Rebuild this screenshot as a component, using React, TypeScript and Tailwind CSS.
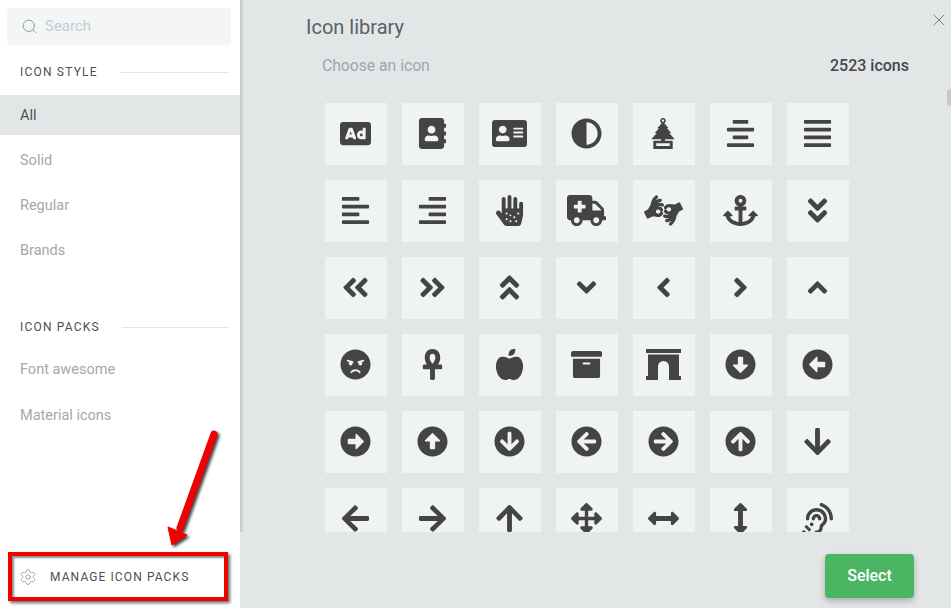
import { Search, Settings, X } from 'lucide-react';
import {
  FaAd, FaAddressBook, FaAddressCard, FaAdjust, FaAlignCenter, FaAlignJustify,
  FaAlignLeft, FaAlignRight, FaAllergies, FaAmbulance, FaAmericanSignLanguageInterpreting, FaAnchor, FaAngleDoubleDown,
  FaAngleDoubleLeft, FaAngleDoubleRight, FaAngleDoubleUp, FaAngleDown, FaAngleLeft, FaAngleRight, FaAngleUp,
  FaAngry, FaAnkh, FaAppleAlt, FaArchive, FaArrowAltCircleDown, FaArrowAltCircleLeft,
  FaArrowAltCircleRight, FaArrowAltCircleUp, FaArrowCircleDown, FaArrowCircleLeft, FaArrowCircleRight, FaArrowCircleUp, FaArrowDown,
  FaArrowLeft, FaArrowRight, FaArrowUp, FaArrowsAlt, FaArrowsAltH, FaArrowsAltV, FaAssistiveListeningSystems,
} from 'react-icons/fa';

// older FA5 glyphs, the package ships a different drawing for these two
function TreeFreshener() {
  return (
    <svg width="24" height="31" viewBox="0 0 24 32" fill="currentColor" fillRule="evenodd">
      <path d="M12 0a2.8 2.8 0 0 1 1.3 5.3L18 10.5h-2l4.500 5h-2L24 22H14v1.500h8V32H2v-8.500h8V22H0l5.500-6.500h-2l4.500-5H6l4.700-5.200A2.800 2.800 0 0 1 12 0Zm0 1.600a1.200 1.200 0 1 0 0 2.400 1.200 1.200 0 0 0 0-2.400ZM5 26v3h14v-3Z" />
    </svg>
  );
}

function Archway() {
  return (
    <svg width="35" height="31" viewBox="0 0 35 31" fill="currentColor">
      <path d="M0 0H35V4H0Z" />
      <path d="M2 5.500H33V27H35V31H23V17.500A5.500 5.500 0 0 0 12 17.500V31H0V27H2Z" />
    </svg>
  );
}

// size is the box the glyph is fitted in: wide FA glyphs need more than the 31px em
const icons: { Icon: React.ComponentType<{ size?: number }>; size?: number }[] = [
  { Icon: FaAd }, { Icon: FaAddressBook }, { Icon: FaAddressCard, size: 35 }, { Icon: FaAdjust }, { Icon: TreeFreshener }, { Icon: FaAlignCenter }, { Icon: FaAlignJustify },
  { Icon: FaAlignLeft }, { Icon: FaAlignRight }, { Icon: FaAllergies }, { Icon: FaAmbulance, size: 39 }, { Icon: FaAmericanSignLanguageInterpreting, size: 39 }, { Icon: FaAnchor, size: 35 }, { Icon: FaAngleDoubleDown },
  { Icon: FaAngleDoubleLeft }, { Icon: FaAngleDoubleRight }, { Icon: FaAngleDoubleUp }, { Icon: FaAngleDown }, { Icon: FaAngleLeft }, { Icon: FaAngleRight }, { Icon: FaAngleUp },
  { Icon: FaAngry }, { Icon: FaAnkh }, { Icon: FaAppleAlt }, { Icon: FaArchive }, { Icon: Archway }, { Icon: FaArrowAltCircleDown }, { Icon: FaArrowAltCircleLeft },
  { Icon: FaArrowAltCircleRight }, { Icon: FaArrowAltCircleUp }, { Icon: FaArrowCircleDown }, { Icon: FaArrowCircleLeft }, { Icon: FaArrowCircleRight }, { Icon: FaArrowCircleUp }, { Icon: FaArrowDown },
  { Icon: FaArrowLeft }, { Icon: FaArrowRight }, { Icon: FaArrowUp }, { Icon: FaArrowsAlt }, { Icon: FaArrowsAltH }, { Icon: FaArrowsAltV }, { Icon: FaAssistiveListeningSystems },
];

function SectionHeading({ label }: { label: string }) {
  return (
    <div className="flex items-center gap-[22px] pl-5 pr-[11px]">
      <span className="text-xs tracking-[1.2px] text-[#4a5058] whitespace-nowrap">{label}</span>
      <div className="h-px flex-1 bg-[#e3e6e7]" />
    </div>
  );
}

function Sidebar() {
  return (
    <aside className="w-[240px] h-full shrink-0 bg-white flex flex-col">
      <div className="ml-[7px] mr-[9px] mt-2 h-[37px] shrink-0 rounded-sm bg-[#f4f6f6] flex items-center pl-[14px] gap-[7px]">
        <Search className="w-[17px] h-[17px] text-[#8a9aa6]" strokeWidth={1.4} />
        <span className="text-[15px] text-[#c3ccd4]">Search</span>
      </div>

      <div className="mt-[19px]"><SectionHeading label="ICON STYLE" /></div>
      <div className="mt-[15px] flex flex-col gap-[5px] text-[14.500px] text-[#a3a8ad]">
        <div className="h-10 flex items-center pl-5 pt-0.5 bg-[#e3e6e7] text-[#4a5058]">All</div>
        <div className="h-10 flex items-center pl-5 pt-0.5">Solid</div>
        <div className="h-10 flex items-center pl-5 pt-0.5">Regular</div>
        <div className="h-10 flex items-center pl-5 pt-0.5">Brands</div>
      </div>

      <div className="mt-[49px]"><SectionHeading label="ICON PACKS" /></div>
      <div className="mt-[25px] flex flex-col gap-[27px] text-[14.500px] text-[#a3a8ad]">
        <div className="pl-5 h-[19px] leading-[19px]">Font awesome</div>
        <div className="pl-5 h-[19px] leading-[19px]">Material icons</div>
      </div>

      <div className="mt-auto mb-[22px] pl-[19px] flex items-center gap-[13px]">
        <Settings className="w-[18px] h-[18px] text-[#8a96a3]" strokeWidth={1.1} />
        <span className="text-xs tracking-[1.1px] text-[#4a5058] whitespace-nowrap">MANAGE ICON PACKS</span>
      </div>
    </aside>
  );
}

function IconGrid() {
  return (
    <div className="grid grid-cols-[repeat(7,62px)] gap-[15px] ml-[85px] pt-[23px]">
      {icons.map(({ Icon, size }, i) => (
        <div key={i} className="w-[62px] h-[62px] pr-0.5 pb-0.5 bg-[#eff3f4] flex items-center justify-center text-[#444444]">
          <Icon size={size ?? 31} />
        </div>
      ))}
    </div>
  );
}

// red callout drawn on top of the screenshot
function Callout() {
  return (
    <div className="absolute inset-0 pointer-events-none">
      <div className="absolute left-[8px] top-[552px] w-[220px] h-[49px] border-[4px] border-[#f00000] shadow-[2px_2px_3px_rgba(0,0,0,0.6),inset_2px_2px_2px_rgba(0,0,0,0.45)]" />
      <svg className="absolute left-0 top-0 drop-shadow-[2px_2px_1.500px_rgba(0,0,0,0.75)]" width="951" height="608" viewBox="0 0 951 608">
        <path d="M214 434 L180 528" stroke="#f00000" strokeWidth="7" strokeLinecap="round" fill="none" />
        <path d="M168 527 L187 535 L172 545 Z" fill="#f00000" stroke="#f00000" strokeWidth="1" />
      </svg>
    </div>
  );
}

export default function App() {
  return (
    <div className="relative w-[951px] h-[608px] overflow-hidden flex bg-[#e3e6e7] font-['Roboto',sans-serif]">
      <Sidebar />
      <main className="relative flex-1 h-full flex flex-col">
        <section className="relative h-[532px] shrink-0 flex flex-col shadow-[inset_5px_0_4px_-4px_rgba(0,0,0,0.22)]">
          <h1 className="ml-[66px] mt-[14px] text-xl leading-[26px] text-[#5a6068]">Icon library</h1>
          <div className="mt-[16px] ml-[82px] mr-[42px] flex items-center justify-between h-5">
            <span className="text-[15.700px] text-[#9aa7b0]">Choose an icon</span>
            <span className="text-base font-medium text-[#44474b]">2523 icons</span>
          </div>
          <div className="mt-[4px] flex-1 overflow-hidden">
            <IconGrid />
          </div>
          <div className="absolute right-0 top-[89px] w-1 h-[17px] rounded-l-sm bg-[#c4c6c7]" />
          <X className="absolute left-[689px] top-[10px] w-[20px] h-[20px] text-[#5f6870]" strokeWidth={1} />
        </section>
        <div className="flex-1 flex justify-end pt-[22px] pr-[37px]">
          <button className="w-[89px] h-[44px] rounded bg-[#4cb563] text-white text-base font-medium shadow-[0_3px_6px_rgba(0,0,0,0.25)]">
            Select
          </button>
        </div>
      </main>
      <Callout />
    </div>
  );
}
